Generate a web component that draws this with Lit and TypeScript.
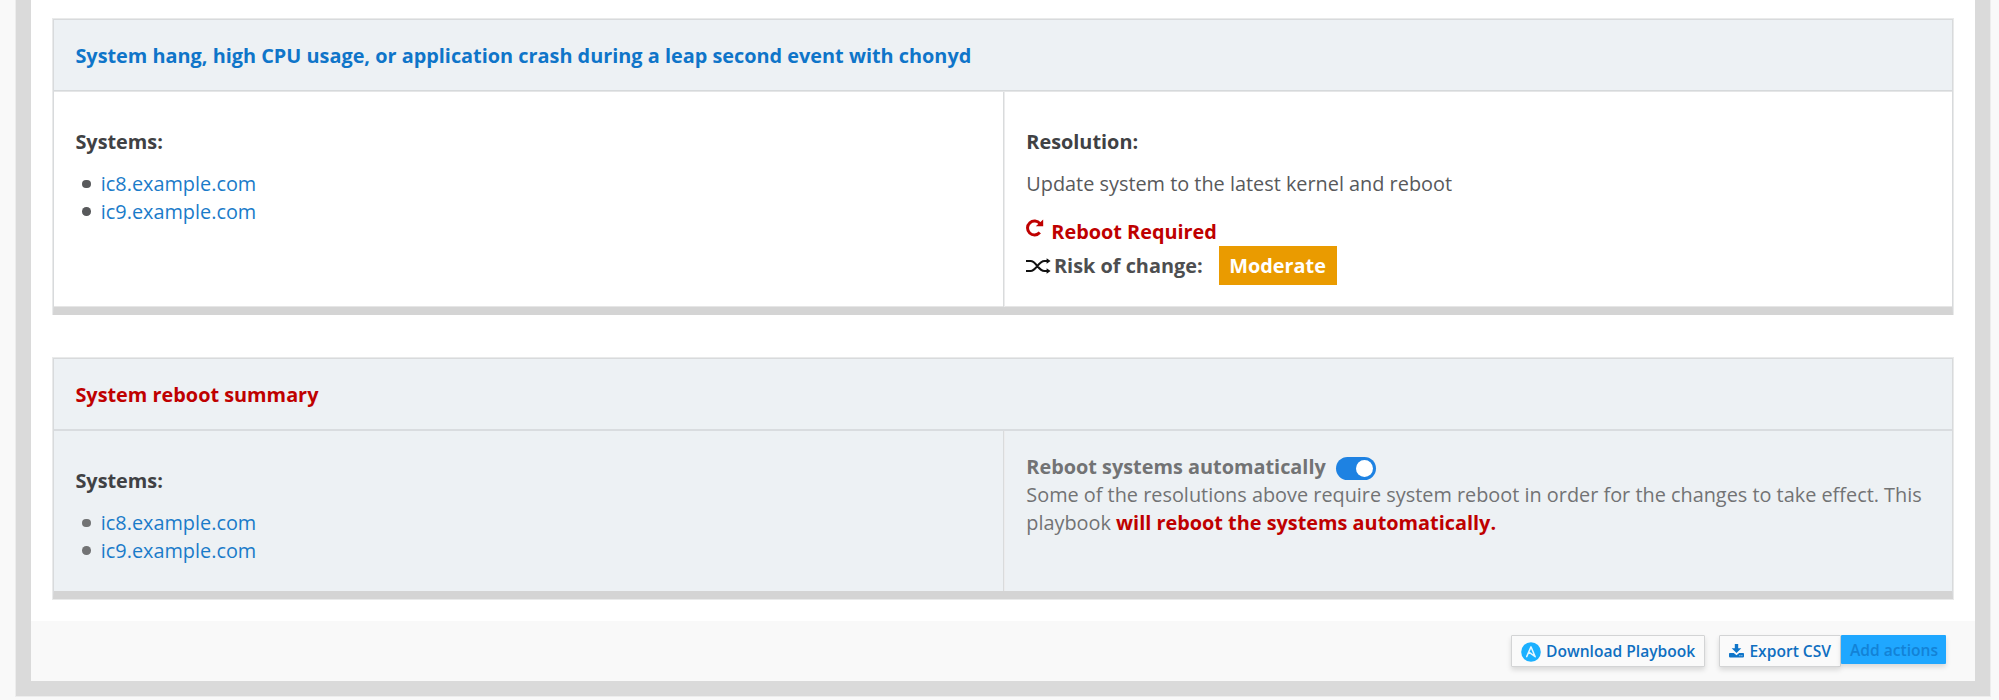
import { LitElement, html, svg, css } from "lit";
import { customElement } from "lit/decorators.js";

const SYSTEMS = ["ic8.example.com", "ic9.example.com"];

const rebootIcon = html`<svg class="reboot-icon" width="18" height="18" viewBox="0 0 18 18">
  ${svg`<path d="M14 4.6A7 7 0 1 0 13.8 13.6" fill="none" stroke="#bf0000" stroke-width="3"/>
  <path d="M17.2 .6V7.2H9.8Z" fill="#bf0000"/>`}
</svg>`;

const shuffleIcon = html`<svg class="shuffle-icon" width="25" height="16" viewBox="0 0 25 16">
  ${svg`<path d="M0 3H4.5C10.5 3 12 13 18.5 13H22M0 13H4.5C10.5 13 12 3 18.5 3H22" fill="none" stroke="#111" stroke-width="2.2"/>
  <path d="M20.6 .3L24.6 3L20.6 5.7ZM20.6 10.3L24.6 13L20.6 15.7Z" fill="#111"/>`}
</svg>`;

const ansibleIcon = html`<svg class="ansible-icon" width="20" height="20" viewBox="0 0 20 20">
  ${svg`<circle cx="10" cy="10" r="9.8" fill="#1bb0ff"/>
  <path d="M5.7 14.6L10 4.9L14.2 14.7L7.9 10.2" fill="none" stroke="#e4f6ff" stroke-width="1.5" stroke-linejoin="round" stroke-linecap="round"/>`}
</svg>`;

const downloadIcon = html`<svg class="download-icon" width="15" height="14" viewBox="0 0 15 14">
  ${svg`<path d="M5.8 0H9.2V4.3H12.3L7.5 9L2.7 4.3H5.8Z" fill="#0f75c9"/>
  <path d="M.8 9H4.8L7.5 11.3L10.2 9H14.2Q15 9 15 9.8V12.6Q15 13.4 14.2 13.4H.8Q0 13.4 0 12.6V9.8Q0 9 .8 9Z" fill="#0f75c9"/>
  <path d="M10.4 11.7H11.4M12.4 11.7H13.4" stroke="#f9f9f9" stroke-width=".8"/>`}
</svg>`;

@customElement("system-list")
export class SystemList extends LitElement {
  static styles = css`
    :host { display: block; }
    .title { margin: 0 0 14px; font-weight: 700; color: #404144; }
    .list { list-style: none; margin: 0; padding: 0; }
    .item { display: flex; align-items: center; gap: 9.8px; padding-left: 7px; height: 27.7px; }
    .dot { width: 8.6px; height: 8.6px; border-radius: 50%; background: currentColor; }
    .link { color: #1a7bc9; text-decoration: none; }
  `;
  render() {
    return html`<p class="title">Systems:</p>
      <ul class="list">
        ${SYSTEMS.map(s => html`<li class="item"><span class="dot"></span><a class="link">${s}</a></li>`)}
      </ul>`;
  }
}

@customElement("app-root")
export class AppRoot extends LitElement {
  static styles = css`
    :host {
      display: block; box-sizing: border-box; width: 1999px; height: 700px; overflow: hidden;
      background: #f9f9f9; padding: 0 9px 0 16px;
      font: 400 19.88px/28px "Open Sans", sans-serif; color: #58595b;
    }
    .modal {
      box-sizing: border-box; width: 1974px; height: 696px;
      border: solid #dadada; border-width: 0 15px 15px; background: #fff;
      box-shadow: 0 0 0 1px #ededed;
      display: flex; flex-direction: column;
    }
    .content { height: 621px; box-sizing: border-box; padding: 19px 22px 0; }
    .card {
      box-sizing: border-box; border: 1px solid #d8dadc; border-bottom: 8px solid #d4d4d4;
      box-shadow: 0 0 0 1px #e9eaea; display: flex; flex-direction: column;
    }
    .card.plan { height: 296px; clip-path: inset(-1px -1px 0 -1px); }
    .card.summary { height: 241px; margin-top: 43px; background: #edf1f4; color: #727374; }
    .head {
      box-sizing: border-box; height: 72px; flex: none; padding: 22px 22px 0 21.4px;
      background: #edf1f4; border-bottom: 1px solid #e5e6e7; box-shadow: inset 0 -1px #d6d9db;
      font-weight: 700; color: #0f75c9;
    }
    .summary .head { color: #bf0000; border-color: #d9dcdf; box-shadow: inset 0 -1px #d9dcdf; }
    .body { flex: 1; display: grid; grid-template-columns: 949px 1fr; }
    .left { padding: 36px 22px 0 21.4px; }
    .right { border-left: 1px solid #d9dbdc; box-shadow: inset 1px 0 #ececed; padding: 36px 22px 0 22.3px; }
    .plan .body { box-shadow: inset 0 -1px #e6e6e6; }
    .summary .right { padding-top: 22px; }
    .label { margin: 0; font-weight: 700; color: #404144; }
    .fix { margin: 14px 0 0; }
    .reboot { display: flex; margin-top: 20px; gap: 7px; font-weight: 700; color: #bf0000; height: 28px; }
    .reboot-icon { margin-top: 1px; }
    .risk { display: flex; align-items: center; height: 39px; font-weight: 700; color: #4d4e50; }
    .shuffle-icon { margin-right: 2.7px; }
    .badge {
      box-sizing: border-box; margin-left: 16px; width: 118px; height: 39px; line-height: 39px;
      text-align: center; color: #fff; background: #ea9b00; border: 0;
    }
    .switch-row { display: flex; align-items: center; height: 28px; font-weight: 700; gap: 10px; }
    .switch {
      box-sizing: border-box; width: 40px; height: 23px; border-radius: 12px; background: #1e82e2;
      padding: 3px; display: flex; justify-content: flex-end; margin-top: 2px;
    }
    .knob { width: 17px; height: 17px; border-radius: 50%; background: #fff; }
    .note { margin: 0; line-height: 28px; }
    .warn { color: #bf0000; font-weight: 700; }
    .footer {
      flex: 1; background: #f9f9f9; display: flex; justify-content: flex-end; align-items: flex-start;
      padding: 14px 29px 0 0;
    }
    .btn {
      box-sizing: border-box; height: 32px; display: flex; align-items: center; white-space: nowrap;
      border: 1.4px solid #d3d4d5; background: #fafafa; color: #0f6fc1;
      box-shadow: 0 3px 5px rgba(0,0,0,.13);
      font: 600 15.6px/30px "Open Sans", sans-serif; padding: 0 0 0 9px; border-radius: 1px;
    }
    .playbook { width: 194px; gap: 5.4px; margin-right: 14px; padding-left: 8.6px; }
    .ansible-icon { margin-top: 2px; }
    .export { width: 122px; gap: 5.4px; }
    .download-icon { margin-top: -1px; }
    .add {
      height: 29px; width: 105px; border: 0; background: #1fa7ff; color: #1382d6;
      padding: 1px 0 0 9px; line-height: 28px;
    }
  `;
  render() {
    return html`
      <div class="modal">
        <div class="content">
          <section class="card plan">
            <div class="head">System hang, high CPU usage, or application crash during a leap second event with chonyd</div>
            <div class="body">
              <div class="left"><system-list></system-list></div>
              <div class="right">
                <p class="label">Resolution:</p>
                <p class="fix">Update system to the latest kernel and reboot</p>
                <div class="reboot">${rebootIcon}<span>Reboot Required</span></div>
                <div class="risk">${shuffleIcon}<span>Risk of change:</span><span class="badge">Moderate</span></div>
              </div>
            </div>
          </section>
          <section class="card summary">
            <div class="head">System reboot summary</div>
            <div class="body">
              <div class="left"><system-list></system-list></div>
              <div class="right">
                <div class="switch-row"><span>Reboot systems automatically</span><span class="switch"><span class="knob"></span></span></div>
                <p class="note">Some of the resolutions above require system reboot in order for the changes to take effect. This playbook <span class="warn">will reboot the systems automatically.</span></p>
              </div>
            </div>
          </section>
        </div>
        <div class="footer">
          <button class="btn playbook">${ansibleIcon}<span>Download Playbook</span></button>
          <button class="btn export">${downloadIcon}<span>Export CSV</span></button>
          <button class="btn add">Add actions</button>
        </div>
      </div>`;
  }
}
